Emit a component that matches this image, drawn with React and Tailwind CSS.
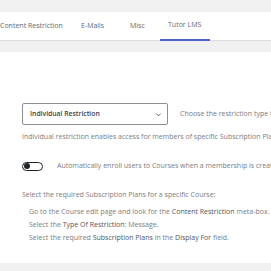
import React from "react";

const App = () => {
  return (
    <div
      className="w-[271px] h-[271px] overflow-hidden bg-[#f0f0f1] text-[#787c82]"
      style={{ fontFamily: "'Open Sans', 'Noto Sans', sans-serif" }}
    >
      <div className="h-[12px]" />
      <div className="h-[29px] bg-white border-b border-[#dcdcde] flex items-stretch whitespace-nowrap text-[7px] text-[#646970]">
        <div className="w-[81px] shrink-0 flex items-center">Content Restriction</div>
        <div className="w-[49px] shrink-0 flex items-center">E-Mails</div>
        <div className="w-[30px] shrink-0 flex items-center">Misc</div>
        <div className="w-[50px] shrink-0 px-[8px] flex items-center border-b-[2px] border-[#4f63c6] mb-[-1px]">
          Tutor LMS
        </div>
      </div>
      <div className="h-[11px]" />
      <div className="h-[211px] bg-white pl-[22px] pt-[51px] whitespace-nowrap overflow-hidden text-[7px] leading-[10px]">
        <div className="flex items-center">
          <div className="shrink-0 w-[146px] h-[22px] border border-[#8c8f94] rounded-[2px] flex items-center justify-between pl-[7px] pr-[5px] text-[#3c434a] font-semibold text-[6.8px]">
            <span>Individual Restriction</span>
            <svg width="7" height="7" viewBox="0 0 8 8" fill="none" stroke="#50575e" strokeWidth="1.1">
              <path d="M1.5 3 L4 5.5 L6.5 3" />
            </svg>
          </div>
          <span className="ml-[12px]">Choose the restriction type for this course.</span>
        </div>
        <div className="mt-[7px]">
          Individual restriction enables access for members of specific Subscription Plans.
        </div>
        <div className="flex items-center mt-[19px] h-[10px]">
          <div className="shrink-0 w-[21px] h-[9px] rounded-full border border-[#1d2327] flex items-center pl-[1px]">
            <div className="w-[6px] h-[6px] rounded-full bg-[#1d2327]" />
          </div>
          <span className="ml-[14px]">
            Automatically enroll users to Courses when a membership is created.
          </span>
        </div>
        <div className="mt-[19px]">Select the required Subscription Plans for a specific Course:</div>
        <div className="pl-[7px] mt-[7px] flex flex-col gap-[3px]">
          <div>
            Go to the Course edit page and look for the{" "}
            <span className="text-[#50575e] font-medium">Content Restriction</span> meta-box.
          </div>
          <div>
            Select the <span className="text-[#50575e] font-medium">Type Of Restriction</span>: Message.
          </div>
          <div>
            Select the required <span className="text-[#50575e] font-medium">Subscription Plans</span> in the{" "}
            <span className="text-[#50575e] font-medium">Display For</span> field.
          </div>
        </div>
      </div>
    </div>
  );
};

export default App;
